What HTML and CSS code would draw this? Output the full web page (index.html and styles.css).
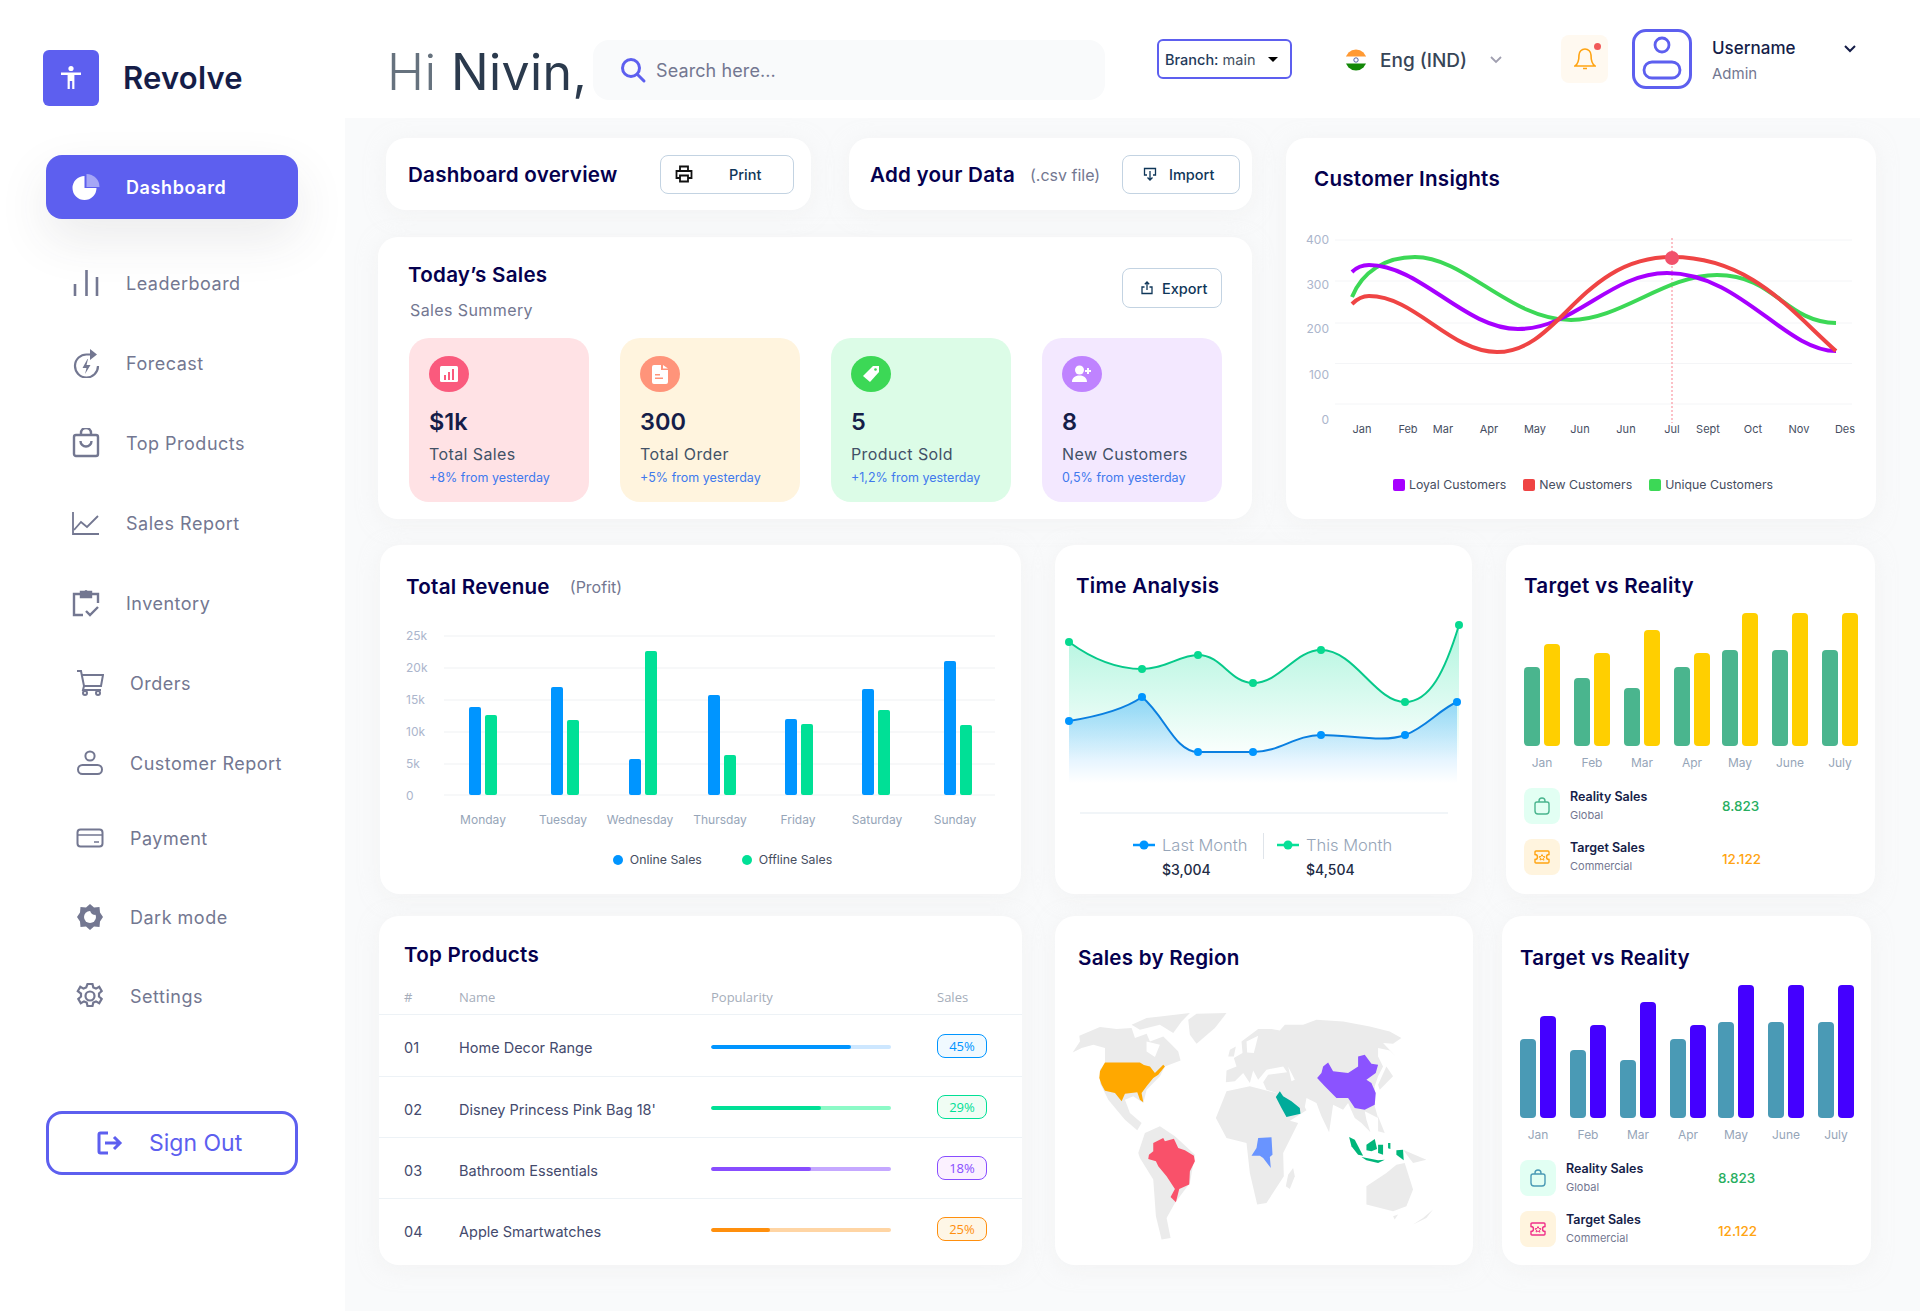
FILE: index.html
```html
<!DOCTYPE html>
<html lang="en">
<head>
    <meta charset="UTF-8">
    <meta name="viewport" content="width=device-width, initial-scale=1.0">
    <title>Revolve Dashboard</title>
    <link rel="stylesheet" href="styles.css">
</head>
<body>
<div class="page">

    <aside class="sidebar">
        <div class="brand">
            <div class="brand-logo">
                <svg width="24" height="26" viewBox="0 0 24 26" fill="#fff"><circle cx="12" cy="3.5" r="2.6"/><path d="M2 7.5h20v2.6h-6.6V24h-2.2v-8h-2.4v8H8.600V10.100H2z"/></svg>
            </div>
            <span class="brand-name">Revolve</span>
        </div>

        <a class="nav-active">
            <svg class="nav-icon" width="28" height="28" viewBox="0 0 28 28"><path fill="#fff" d="M12.500 3A12 12 0 1 0 24.500 15H12.500z"/><path fill="#a5a6f6" d="M14.500 1A13 13 0 0 1 27.500 14H14.500z"/></svg>
            <span>Dashboard</span>
        </a>

        <nav class="nav-list">
            <a class="nav-item">
                <svg class="nav-icon" width="28" height="28" viewBox="0 0 28 28" fill="none" stroke="#737791" stroke-width="2.600"><path d="M3 27v-12M14.500 27V1M25 27V8"/></svg>
                <span>Leaderboard</span>
            </a>
            <a class="nav-item">
                <svg class="nav-icon" width="28" height="30" viewBox="0 0 28 30" fill="none" stroke="#737791" stroke-width="2.200"><path d="M19 6.500H15A11.500 11.500 0 1 0 26 18"/><path fill="#737791" stroke="none" d="M18 1l7 5.500-7 5.500zM15.500 11l-5 9h4l-1.500 6 5.500-9h-4l1.500-6z"/></svg>
                <span>Forecast</span>
            </a>
            <a class="nav-item">
                <svg class="nav-icon" width="28" height="30" viewBox="0 0 28 30" fill="none" stroke="#737791" stroke-width="2.400"><rect x="2" y="7" width="24" height="21" rx="2"/><path d="M9 7V5a5 5 0 0 1 10 0v2M8.500 13a5.500 5.500 0 0 0 11 0"/></svg>
                <span>Top Products</span>
            </a>
            <a class="nav-item">
                <svg class="nav-icon" width="28" height="24" viewBox="0 0 28 24" fill="none" stroke="#737791" stroke-width="1.800"><path d="M1 1v22h26"/><path d="M2 19l7-8 6 5 11-11"/></svg>
                <span>Sales Report</span>
            </a>
            <a class="nav-item">
                <svg class="nav-icon" width="28" height="28" viewBox="0 0 28 28" fill="none" stroke="#737791" stroke-width="2.400"><path d="M8 5H2v21h9M20 5h6v9"/><path fill="#737791" d="M9 3h10v5H9z"/><circle cx="14" cy="2.500" r="1.500" fill="#737791" stroke="none"/><path d="M14 22l4 4 8-8"/></svg>
                <span>Inventory</span>
            </a>
            <a class="nav-item nav-item--shift">
                <svg class="nav-icon" width="28" height="26" viewBox="0 0 28 26" fill="none" stroke="#737791" stroke-width="2"><path d="M1 1h4l3 15h17l2-11H6"/><path d="M8 16l-1 4h18"/><circle cx="9" cy="23" r="2"/><circle cx="22" cy="23" r="2"/></svg>
                <span>Orders</span>
            </a>
            <a class="nav-item nav-item--shift">
                <svg class="nav-icon" width="28" height="26" viewBox="0 0 28 26" fill="none" stroke="#737791" stroke-width="2"><circle cx="14" cy="6" r="4.600"/><rect x="2" y="15" width="24" height="9" rx="4.500"/></svg>
                <span>Customer Report</span>
            </a>
            <a class="nav-item nav-item--shift nav-item--pull">
                <svg class="nav-icon" width="28" height="20" viewBox="0 0 28 20" fill="none" stroke="#737791" stroke-width="2"><rect x="1.500" y="1.500" width="25" height="17" rx="3"/><path d="M1.500 7h25M18 14h5" stroke-width="1.400"/></svg>
                <span>Payment</span>
            </a>
            <a class="nav-item nav-item--shift nav-item--dark">
                <svg class="nav-icon" width="28" height="28" viewBox="0 0 28 28"><path fill="#737791" d="M14 1l4 3.500 5.500-.5.500 5.500L27 14l-3 4.500-.500 5.500-5.500-.5L14 27l-4-3.500-5.500.5-.500-5.500L1 14l3-4.500.500-5.500 5.500.5z"/><circle cx="14" cy="14" r="6" fill="#fff"/><path fill="#737791" d="M14 7.500a6.500 6.500 0 0 1 6 4.500 6 6 0 0 1-6-4.500z"/></svg>
                <span>Dark mode</span>
            </a>
            <a class="nav-item nav-item--shift nav-item--settings">
                <svg class="nav-icon" width="28" height="28" viewBox="0 0 28 28" fill="none" stroke="#737791" stroke-width="2.200"><circle cx="14" cy="14" r="4.500"/><path d="M11.500 2h5l.8 3.500 2.700 1.100 3.200-1.800 2.500 4.300-2.700 2.400v3l2.700 2.400-2.500 4.300-3.200-1.800-2.700 1.100-.8 3.500h-5l-.8-3.500-2.700-1.100-3.200 1.800-2.500-4.300 2.700-2.400v-3L1.800 9.100l2.500-4.300 3.200 1.800 2.700-1.100z"/></svg>
                <span>Settings</span>
            </a>
        </nav>

        <a class="sign-out">
            <svg width="26" height="24" viewBox="0 0 26 24" fill="none" stroke="#5d5fef" stroke-width="3"><path d="M11 2H3.500A1.500 1.500 0 0 0 2 3.500v17A1.500 1.500 0 0 0 3.500 22H11"/><path d="M8 12h15M17 6l6 6-6 6"/></svg>
            <span>Sign Out</span>
        </a>
    </aside>

    <main class="main">
        <header class="topbar">
            <h1 class="greeting"><span class="greeting-hi">Hi</span> Nivin,</h1>
            <div class="search">
                <svg width="28" height="28" viewBox="0 0 28 28" fill="none" stroke="#5d5fef" stroke-width="3"><circle cx="12" cy="12" r="8.500"/><path d="M18.500 18.500L25 25" stroke-linecap="round"/></svg>
                <span>Search here...</span>
            </div>
            <div class="branch"><span><b>Branch:</b> main</span><i class="caret"></i></div>
            <div class="lang">
                <svg width="22" height="22" viewBox="0 0 22 22"><clipPath id="flagClip"><circle cx="11" cy="11" r="10.500"/></clipPath><g clip-path="url(#flagClip)"><rect width="22" height="8" fill="#ff9933"/><rect y="7.500" width="22" height="7" fill="#fff"/><rect y="14.500" width="22" height="8" fill="#138808"/></g><circle cx="11" cy="11" r="2.200" fill="none" stroke="#2a3a8c" stroke-width=".8"/></svg>
                <span>Eng (IND)</span>
                <svg width="12" height="8" viewBox="0 0 12 8" fill="none" stroke="#a09fb0" stroke-width="1.800"><path d="M1 1l5 5 5-5"/></svg>
            </div>
            <div class="bell">
                <svg width="22" height="24" viewBox="0 0 22 24" fill="none" stroke="#ffa412" stroke-width="1.600"><path d="M11 2a6 6 0 0 0-6 6c0 7-2.500 10-4 11h20c-1.500-1-4-4-4-11a6 6 0 0 0-6-6zM9 21.500h4"/></svg>
                <i class="bell-dot"></i>
            </div>
            <div class="avatar">
                <svg width="42" height="46" viewBox="0 0 42 46" fill="none" stroke="#5d5fef" stroke-width="2.800"><circle cx="21" cy="9" r="7"/><rect x="3" y="26" width="36" height="16" rx="8"/></svg>
            </div>
            <div class="user">
                <div class="user-name">Username</div>
                <div class="user-role">Admin</div>
            </div>
            <svg class="user-caret" width="12" height="8" viewBox="0 0 12 8" fill="none" stroke="#151d48" stroke-width="2"><path d="M1 1l5 5 5-5"/></svg>
        </header>

        <div class="content">
            <section class="row-top">
                <div class="col-left">
                    <div class="toolbar">
                        <div class="card bar-card bar-card--overview">
                            <h2 class="title">Dashboard overview</h2>
                            <button class="btn btn--print">
                                <svg width="18" height="18" viewBox="0 0 18 18" fill="none" stroke="#111" stroke-width="1.800"><path d="M5 6V1.500h8V6M5 13H1.500V6h15v7H13"/><path d="M5 10.500h8v6H5z"/></svg>
                                <span>Print</span>
                            </button>
                        </div>
                        <div class="card bar-card bar-card--import">
                            <h2 class="title">Add your Data</h2>
                            <span class="title-note">(.csv file)</span>
                            <button class="btn btn--import">
                                <svg width="14" height="14" viewBox="0 0 14 14" fill="none" stroke="#0f3659" stroke-width="1.300"><path d="M4 8H1.500V1.500h11V8H10M7 4v9M4.500 10.500L7 13l2.500-2.500"/></svg>
                                <span>Import</span>
                            </button>
                        </div>
                    </div>

                    <div class="card sales">
                        <div class="sales-head">
                            <div>
                                <h2 class="title">Today’s Sales</h2>
                                <p class="sales-sub">Sales Summery</p>
                            </div>
                            <button class="btn btn--export">
                                <svg width="14" height="14" viewBox="0 0 14 14" fill="none" stroke="#0f3659" stroke-width="1.300"><path d="M4.500 6H2v6.500h10V6H9.500M7 9V1M4.800 3.200L7 1l2.200 2.200"/></svg>
                                <span>Export</span>
                            </button>
                        </div>
                        <div class="stat-grid">
                            <div class="stat stat--pink">
                                <div class="stat-icon stat-icon--pink"><svg width="18" height="16" viewBox="0 0 18 16"><rect width="18" height="16" rx="1.500" fill="#fff"/><path fill="#fa5a7d" d="M4 9h2v5H4zM8 6h2v8H8zM12 3h2v11h-2z"/></svg></div>
                                <div class="stat-value">$1k</div>
                                <div class="stat-label">Total Sales</div>
                                <div class="stat-note">+8% from yesterday</div>
                            </div>
                            <div class="stat stat--cream">
                                <div class="stat-icon stat-icon--orange"><svg width="16" height="19" viewBox="0 0 16 19"><path fill="#fff" d="M2 0h7v5h7v12a2 2 0 0 1-2 2H2a2 2 0 0 1-2-2V2a2 2 0 0 1 2-2zM11 0l5 3.500h-5z"/><path fill="#ff947a" d="M3 9h5v1.500H3zM3 12.500h8V14H3z"/></svg></div>
                                <div class="stat-value">300</div>
                                <div class="stat-label">Total Order</div>
                                <div class="stat-note">+5% from yesterday</div>
                            </div>
                            <div class="stat stat--mint">
                                <div class="stat-icon stat-icon--green"><svg width="18" height="18" viewBox="0 0 18 18"><path fill="#fff" d="M11 1h6v6l-9 10-7-6z"/><circle cx="13.500" cy="4.500" r="1.300" fill="#3cd856"/></svg></div>
                                <div class="stat-value">5</div>
                                <div class="stat-label">Product Sold</div>
                                <div class="stat-note">+1,2% from yesterday</div>
                            </div>
                            <div class="stat stat--lilac">
                                <div class="stat-icon stat-icon--purple"><svg width="20" height="18" viewBox="0 0 20 18" fill="#fff"><circle cx="7.500" cy="5" r="4.500"/><path d="M0 17c0-4 3-6.500 7.500-6.500S15 13 15 17zM15 3h2v2h2v2h-2v2h-2V7h-2V5h2z"/></svg></div>
                                <div class="stat-value">8</div>
                                <div class="stat-label">New Customers</div>
                                <div class="stat-note">0,5% from yesterday</div>
                            </div>
                        </div>
                    </div>
                </div>

                <div class="card insights">
                    <h2 class="title">Customer Insights</h2>
                    <svg class="chart chart--insights" width="590" height="220" viewBox="1286 225 590 220">
                        <g class="grid-line">
                            <path d="M1335 240H1852M1335 281H1852M1335 323H1852M1335 363.500H1852M1335 404H1852"/>
                        </g>
                        <g class="axis-y" text-anchor="end">
                            <text x="1329" y="244">400</text>
                            <text x="1329" y="289">300</text>
                            <text x="1329" y="333">200</text>
                            <text x="1329" y="379">100</text>
                            <text x="1329" y="424">0</text>
                        </g>
                        <g class="axis-x" text-anchor="middle">
                            <text x="1362" y="433">Jan</text>
                            <text x="1408" y="433">Feb</text>
                            <text x="1443" y="433">Mar</text>
                            <text x="1489" y="433">Apr</text>
                            <text x="1535" y="433">May</text>
                            <text x="1580" y="433">Jun</text>
                            <text x="1626" y="433">Jun</text>
                            <text x="1672" y="433">Jul</text>
                            <text x="1708" y="433">Sept</text>
                            <text x="1753" y="433">Oct</text>
                            <text x="1799" y="433">Nov</text>
                            <text x="1845" y="433">Des</text>
                        </g>
                        <path d="M1672 238V423" stroke="#f9828f" stroke-width="1" stroke-dasharray="2 2" fill="none"/>
                        <g fill="none" stroke-width="4">
                            <path stroke="#3cd856" d="M1352 297C1362 272 1385 257 1415 257C1465 257 1510 320 1571 320C1620 320 1665 275 1717 275C1775 275 1785 322 1836 323"/>
                            <path stroke="#a700ff" d="M1352 272C1356 268 1362 265 1369 265C1420 265 1465 329 1518 329C1575 329 1610 273 1667 273C1740 273 1785 351 1836 351"/>
                            <path stroke="#ef4444" d="M1352 304C1356 300 1362 296 1369 296C1415 296 1450 352 1497 352C1560 352 1580 257 1672 257C1750 257 1790 310 1836 351"/>
                        </g>
                        <circle cx="1672" cy="258" r="7" fill="#f1516b"/>
                    </svg>
                    <div class="legend legend--insights">
                        <span class="legend-item"><i class="swatch swatch--purple"></i>Loyal Customers</span>
                        <span class="legend-item"><i class="swatch swatch--red"></i>New Customers</span>
                        <span class="legend-item"><i class="swatch swatch--green"></i>Unique Customers</span>
                    </div>
                </div>
            </section>

            <section class="row-mid">
                <div class="card revenue">
                    <div class="title-row">
                        <h2 class="title">Total Revenue</h2>
                        <span class="title-note">(Profit)</span>
                    </div>
                    <svg class="chart" width="641" height="215" viewBox="380 620 641 215">
                        <g class="grid-line grid-line--strong">
                            <path d="M444 635H995M444 667H995M444 699H995M444 731H995M444 763H995M444 794H995"/>
                        </g>
                        <g class="axis-y">
                            <text x="406" y="639">25k</text>
                            <text x="406" y="671">20k</text>
                            <text x="406" y="703">15k</text>
                            <text x="406" y="735">10k</text>
                            <text x="406" y="767">5k</text>
                            <text x="406" y="799">0</text>
                        </g>
                        <g fill="#0095ff">
                            <rect x="469" y="706" width="12" height="88" rx="2"/>
                            <rect x="551" y="686" width="12" height="108" rx="2"/>
                            <rect x="629" y="758" width="12" height="36" rx="2"/>
                            <rect x="708" y="694" width="12" height="100" rx="2"/>
                            <rect x="785" y="718" width="12" height="76" rx="2"/>
                            <rect x="862" y="688" width="12" height="106" rx="2"/>
                            <rect x="944" y="660" width="12" height="134" rx="2"/>
                        </g>
                        <g fill="#00e096">
                            <rect x="485" y="714" width="12" height="80" rx="2"/>
                            <rect x="567" y="719" width="12" height="75" rx="2"/>
                            <rect x="645" y="650" width="12" height="144" rx="2"/>
                            <rect x="724" y="754" width="12" height="40" rx="2"/>
                            <rect x="801" y="723" width="12" height="71" rx="2"/>
                            <rect x="878" y="709" width="12" height="85" rx="2"/>
                            <rect x="960" y="724" width="12" height="70" rx="2"/>
                        </g>
                        <g class="axis-x axis-x--soft" text-anchor="middle">
                            <text x="483" y="823">Monday</text>
                            <text x="563" y="823">Tuesday</text>
                            <text x="640" y="823">Wednesday</text>
                            <text x="720" y="823">Thursday</text>
                            <text x="798" y="823">Friday</text>
                            <text x="877" y="823">Saturday</text>
                            <text x="955" y="823">Sunday</text>
                        </g>
                    </svg>
                    <div class="legend legend--revenue">
                        <span class="legend-item"><i class="dot dot--blue"></i>Online Sales</span>
                        <span class="legend-item"><i class="dot dot--green"></i>Offline Sales</span>
                    </div>
                </div>

                <div class="card time">
                    <h2 class="title">Time Analysis</h2>
                    <svg class="chart" width="417" height="200" viewBox="1055 615 417 200">
                        <defs>
                            <linearGradient id="areaGreen" x1="0" y1="0" x2="0" y2="1">
                                <stop offset="0" stop-color="#07e098" stop-opacity=".32"/>
                                <stop offset="1" stop-color="#07e098" stop-opacity="0"/>
                            </linearGradient>
                            <linearGradient id="areaBlue" x1="0" y1="0" x2="0" y2="1">
                                <stop offset="0" stop-color="#0095ff" stop-opacity=".36"/>
                                <stop offset="1" stop-color="#0095ff" stop-opacity="0"/>
                            </linearGradient>
                        </defs>
                        <path fill="url(#areaGreen)" d="M1069 641C1095 660 1120 668 1142 668C1165 668 1180 654 1198 654C1222 654 1230 682 1253 682C1280 682 1295 649 1321 649C1355 649 1375 701 1405 701C1430 701 1445 670 1459 624V760H1069Z"/>
                        <path fill="url(#areaBlue)" d="M1069 720C1100 715 1125 708 1142 696C1165 715 1175 751 1198 751H1253C1280 751 1295 734 1321 734C1350 734 1385 742 1405 734C1425 727 1440 708 1457 701V782H1069Z"/>
                        <g fill="none" stroke-width="2">
                            <path stroke="#07c98a" d="M1069 641C1095 660 1120 668 1142 668C1165 668 1180 654 1198 654C1222 654 1230 682 1253 682C1280 682 1295 649 1321 649C1355 649 1375 701 1405 701C1430 701 1445 670 1459 624"/>
                            <path stroke="#0a7fe0" d="M1069 720C1100 715 1125 708 1142 696C1165 715 1175 751 1198 751H1253C1280 751 1295 734 1321 734C1350 734 1385 742 1405 734C1425 727 1440 708 1457 701"/>
                        </g>
                        <g fill="#07d990">
                            <circle cx="1069" cy="641" r="4"/><circle cx="1142" cy="668" r="4"/><circle cx="1198" cy="654" r="4"/><circle cx="1253" cy="682" r="4"/><circle cx="1321" cy="649" r="4"/><circle cx="1405" cy="701" r="4"/><circle cx="1459" cy="624" r="4"/>
                        </g>
                        <g fill="#0095ff">
                            <circle cx="1069" cy="720" r="4"/><circle cx="1142" cy="696" r="4"/><circle cx="1198" cy="751" r="4"/><circle cx="1253" cy="751" r="4"/><circle cx="1321" cy="734" r="4"/><circle cx="1405" cy="734" r="4"/><circle cx="1457" cy="701" r="4"/>
                        </g>
                        <path d="M1080 812H1448" stroke="#edf2f6" stroke-width="1.500"/>
                    </svg>
                    <div class="time-legend">
                        <div class="time-col time-col--last">
                            <div class="time-label">
                                <svg width="22" height="10" viewBox="0 0 22 10"><path d="M0 5h22" stroke="#0095ff" stroke-width="2.500"/><circle cx="11" cy="5" r="4.500" fill="#0095ff"/></svg>
                                <span>Last Month</span>
                            </div>
                            <div class="time-value">$3,004</div>
                        </div>
                        <div class="time-col">
                            <div class="time-label">
                                <svg width="22" height="10" viewBox="0 0 22 10"><path d="M0 5h22" stroke="#07e098" stroke-width="2.500"/><circle cx="11" cy="5" r="4.500" fill="#07e098"/></svg>
                                <span>This Month</span>
                            </div>
                            <div class="time-value">$4,504</div>
                        </div>
                    </div>
                </div>

                <div class="card target">
                    <h2 class="title">Target vs Reality</h2>
                    <div class="bars">
                        <div class="bar-group"><i style="height:79px"></i><i style="height:102px"></i></div>
                        <div class="bar-group"><i style="height:68px"></i><i style="height:93px"></i></div>
                        <div class="bar-group"><i style="height:58px"></i><i style="height:116px"></i></div>
                        <div class="bar-group"><i style="height:79px"></i><i style="height:93px"></i></div>
                        <div class="bar-group bar-group--tuck"><i style="height:96px"></i><i style="height:133px"></i></div>
                        <div class="bar-group"><i style="height:96px"></i><i style="height:133px"></i></div>
                        <div class="bar-group"><i style="height:96px"></i><i style="height:133px"></i></div>
                    </div>
                    <div class="bar-labels">
                        <span>Jan</span><span>Feb</span><span>Mar</span><span>Apr</span><span class="bar-group--tuck">May</span><span>June</span><span>July</span>
                    </div>
                    <div class="tv-row">
                        <div class="tv-icon tv-icon--mint"><svg width="16" height="18" viewBox="0 0 16 18" fill="none" stroke="#4ab58e" stroke-width="1.400"><path d="M3 5h10q2 0 2 2v7q0 3-3 3H4q-3 0-3-3V7q0-2 2-2zM5 5V4a3 3 0 0 1 6 0v1"/></svg></div>
                        <div class="tv-text"><b>Reality Sales</b><span>Global</span></div>
                        <div class="tv-value tv-value--green">8.823</div>
                    </div>
                    <div class="tv-row">
                        <div class="tv-icon tv-icon--cream"><svg width="16" height="14" viewBox="0 0 16 14" fill="none" stroke="#ffa412" stroke-width="1.400"><path d="M2 1h12q1 0 1 1v2.500a2.500 2.500 0 0 0 0 5V12q0 1-1 1H2q-1 0-1-1V9.500a2.500 2.500 0 0 0 0-5V2q0-1 1-1z"/><path d="M8 4.500l1 2 2 .3-1.500 1.400.4 2L8 9l-1.900 1 .4-2L5 6.800l2-.3z" stroke-width="1"/></svg></div>
                        <div class="tv-text"><b>Target Sales</b><span>Commercial</span></div>
                        <div class="tv-value tv-value--orange">12.122</div>
                    </div>
                </div>
            </section>

            <section class="row-bottom">
                <div class="card products">
                    <h2 class="title">Top Products</h2>
                    <div class="tbl-row tbl-row--head">
                        <span>#</span><span>Name</span><span>Popularity</span><span>Sales</span>
                    </div>
                    <div class="tbl-row">
                        <span>01</span><span>Home Decor Range</span>
                        <div class="meter meter--blue"><i style="width:78%"></i></div>
                        <span class="pill pill--blue">45%</span>
                    </div>
                    <div class="tbl-row">
                        <span>02</span><span>Disney Princess Pink Bag 18'</span>
                        <div class="meter meter--green"><i style="width:61%"></i></div>
                        <span class="pill pill--green">29%</span>
                    </div>
                    <div class="tbl-row">
                        <span>03</span><span>Bathroom Essentials</span>
                        <div class="meter meter--purple"><i style="width:55.500%"></i></div>
                        <span class="pill pill--purple">18%</span>
                    </div>
                    <div class="tbl-row">
                        <span>04</span><span>Apple Smartwatches</span>
                        <div class="meter meter--orange"><i style="width:33%"></i></div>
                        <span class="pill pill--orange">25%</span>
                    </div>
                </div>

                <div class="card region">
                    <h2 class="title">Sales by Region</h2>
                    <svg class="chart" width="418" height="260" viewBox="15 250 1255 780">
                        <g fill="#ebebeb">
                            <path d="M68 428L90 395L88 378L150 352L200 358L245 355L255 385L290 372L300 395L340 380L360 400L385 425L392 452L345 470L330 500L290 540L280 580L250 560L225 570L240 610L275 640L262 662L225 630L175 570L150 520L150 480L165 460L165 415L130 405L95 415Z"/>
                            <path d="M245 345L290 325L350 318L420 310L395 335L370 370L330 345L270 360Z"/>
                            <path d="M415 330L440 312L530 310L495 355L440 402L420 375Z"/>
                            <path d="M265 730L285 670L330 650L375 680L435 735L420 820L375 880L350 925L362 985L335 990L318 920L310 810L270 745Z"/>
                            <path d="M498 625L530 545L600 530L680 550L710 630L745 640L700 730L702 800L650 880L622 885L600 790L590 700L530 685Z"/>
                            <path d="M730 775L735 800L720 838L708 830L715 795Z"/>
                            <path d="M528 518L530 482L560 470L552 445L578 430L575 395L625 358L665 358L690 362L705 345L760 345L800 330L880 335L960 350L1020 365L1055 385L1030 402L1000 400L1040 442L1020 422L985 415L985 440L1000 470L985 500L975 530L975 590L985 625L945 605L950 630L962 668L935 640L915 625L895 580L880 600L850 585L838 668L815 620L800 580L770 565L765 592L770 602L710 640L700 625L680 570L680 550L650 540L640 518L655 495L712 488L700 470L650 480L625 510L610 482L600 520L580 490L555 515Z"/>
                            <path d="M540 420L558 410L552 440L535 440Z"/>
                            <path d="M1010 470L1030 500L990 540L985 525Z"/>
                            <path d="M985 620L1005 670L985 665Z"/>
                            <path d="M1060 720L1130 750L1090 760Z"/>
                            <path d="M950 830L1010 790L1040 765L1065 760L1090 840L1070 890L1030 905L950 885Z"/>
                            <path d="M1150 900L1130 925L1090 945L1120 925Z"/>
                            <path d="M1030 920L1045 915L1035 930Z"/>
                        </g>
                        <g fill="#fff">
                            <path d="M290 395L330 405L315 442L290 425Z"/>
                            <path d="M590 395L625 378L612 430L592 428Z"/>
                            <path d="M715 470L735 510L725 515Z"/>
                        </g>
                        <path fill="#ffa800" d="M165 458L270 458L282 466L300 470L315 490L340 465L345 470L325 495L310 505L290 530L275 550L280 578L270 570L262 548L225 552L215 575L195 550L165 543L155 525L148 505L150 485Z"/>
                        <path fill="#f9516a" d="M310 700L340 685L345 695L372 687L385 715L405 722L432 738L435 755L420 785L418 825L388 838L378 878L362 862L375 838L350 800L325 770L318 755L295 748L297 735L310 725Z"/>
                        <path fill="#00ab9a" d="M690 545L700 560L725 575L750 595L752 612L710 622L695 595L678 562Z"/>
                        <path fill="#6994ff" d="M625 685L665 683L668 735L660 742L663 775L640 745L630 738L605 738L620 715Z"/>
                        <path fill="#8b53ff" d="M835 458L850 485L895 490L925 470L925 440L945 435L965 462L985 465L978 490L950 510L965 520L978 550L975 585L945 600L915 595L895 565L860 565L825 530L802 505L815 490L820 470Z"/>
                        <g fill="#00b67a">
                            <path d="M898 682L915 690L940 738L925 735L905 710Z"/>
                            <path d="M950 705L975 688L982 718L965 725L950 722Z"/>
                            <path d="M935 742L985 752L1005 750L985 760L950 752Z"/>
                            <path d="M985 705L1000 705L1000 735L985 730Z"/>
                            <path d="M1015 700L1022 700L1022 718L1015 716Z"/>
                            <path d="M1040 722L1060 720L1062 752L1040 735Z"/>
                        </g>
                    </svg>
                </div>

                <div class="card target target--alt">
                    <h2 class="title">Target vs Reality</h2>
                    <div class="bars">
                        <div class="bar-group"><i style="height:79px"></i><i style="height:102px"></i></div>
                        <div class="bar-group"><i style="height:68px"></i><i style="height:93px"></i></div>
                        <div class="bar-group"><i style="height:58px"></i><i style="height:116px"></i></div>
                        <div class="bar-group"><i style="height:79px"></i><i style="height:93px"></i></div>
                        <div class="bar-group bar-group--tuck"><i style="height:96px"></i><i style="height:133px"></i></div>
                        <div class="bar-group"><i style="height:96px"></i><i style="height:133px"></i></div>
                        <div class="bar-group"><i style="height:96px"></i><i style="height:133px"></i></div>
                    </div>
                    <div class="bar-labels">
                        <span>Jan</span><span>Feb</span><span>Mar</span><span>Apr</span><span class="bar-group--tuck">May</span><span>June</span><span>July</span>
                    </div>
                    <div class="tv-row">
                        <div class="tv-icon tv-icon--mint"><svg width="16" height="18" viewBox="0 0 16 18" fill="none" stroke="#4a9ab5" stroke-width="1.400"><path d="M3 5h10q2 0 2 2v7q0 3-3 3H4q-3 0-3-3V7q0-2 2-2zM5 5V4a3 3 0 0 1 6 0v1"/></svg></div>
                        <div class="tv-text"><b>Reality Sales</b><span>Global</span></div>
                        <div class="tv-value tv-value--green">8.823</div>
                    </div>
                    <div class="tv-row">
                        <div class="tv-icon tv-icon--cream"><svg width="16" height="14" viewBox="0 0 16 14" fill="none" stroke="#f0308a" stroke-width="1.400"><path d="M2 1h12q1 0 1 1v2.500a2.500 2.500 0 0 0 0 5V12q0 1-1 1H2q-1 0-1-1V9.500a2.500 2.500 0 0 0 0-5V2q0-1 1-1z"/><path d="M8 4.500l1 2 2 .3-1.500 1.400.4 2L8 9l-1.900 1 .4-2L5 6.800l2-.3z" stroke-width="1"/></svg></div>
                        <div class="tv-text"><b>Target Sales</b><span>Commercial</span></div>
                        <div class="tv-value tv-value--orange">12.122</div>
                    </div>
                </div>
            </section>
        </div>
    </main>
</div>
</body>
</html>
```

FILE: styles.css
```css
* {
    box-sizing: border-box;
    margin: 0;
    padding: 0;
}

body {
    font-family: Inter, "Noto Sans", sans-serif;
    background-color: #f9fafb;
    color: #151d48;
}

.page {
    display: flex;
    width: 1920px;
    height: 1311px;
    overflow: hidden;
}

/* sidebar */
.sidebar {
    width: 345px;
    flex-shrink: 0;
    background-color: #fff;
    padding: 50px 47px 0 46px;
}

.brand {
    display: flex;
    align-items: center;
    gap: 24px;
    height: 56px;
    margin-left: -3px;
}

.brand-logo {
    width: 56px;
    height: 56px;
    border-radius: 6px;
    background-color: #5d5fef;
    display: flex;
    align-items: center;
    justify-content: center;
}

.brand-name {
    margin-top: -2px;
    font-size: 31px;
    font-weight: 600;
    letter-spacing: 0.2px;
}

.nav-active {
    display: flex;
    align-items: center;
    height: 64px;
    margin-top: 49px;
    padding-left: 26px;
    border-radius: 16px;
    background-color: #5d5fef;
    color: #fff;
    font-size: 18px;
    font-weight: 600;
    letter-spacing: 0.6px;
    box-shadow: 0 20px 50px rgba(55, 55, 70, 0.1);
}

.nav-icon {
    margin-right: 26px;
    flex-shrink: 0;
}

.nav-list {
    margin-top: 24px;
}

.nav-item {
    display: flex;
    align-items: center;
    height: 80px;
    padding-left: 26px;
    color: #737791;
    font-size: 18px;
    letter-spacing: 0.5px;
}

.nav-item--shift {
    padding-left: 30px;
}

.nav-item--pull {
    margin-top: -5px;
}

.nav-item--dark {
    margin-top: -1px;
}

.nav-item--settings {
    margin-top: -1px;
}

.sign-out {
    display: flex;
    align-items: center;
    height: 64px;
    margin-top: 75px;
    padding-left: 48px;
    gap: 26px;
    border: 3px solid #5d5fef;
    border-radius: 16px;
    color: #5d5fef;
    font-size: 23px;
}

/* top bar */
.main {
    flex: 1;
    min-width: 0;
}

.topbar {
    display: flex;
    align-items: center;
    height: 118px;
    padding-left: 42px;
    background-color: #fff;
}

.greeting {
    width: 206px;
    flex-shrink: 0;
    margin-top: 26px;
    font-size: 50px;
    font-weight: 400;
    color: #2b3a4d;
    white-space: nowrap;
    letter-spacing: 0.4px;
}

.greeting-hi {
    font-weight: 300;
    color: #66727e;
}

.search {
    display: flex;
    align-items: center;
    gap: 9px;
    width: 512px;
    height: 60px;
    margin-top: 22px;
    padding-left: 26px;
    border-radius: 16px;
    background-color: #f9fafb;
    color: #737791;
    font-size: 18px;
    letter-spacing: 0.1px;
}

.branch {
    display: flex;
    align-items: center;
    justify-content: space-between;
    width: 135px;
    height: 40px;
    margin-left: 52px;
    padding: 0 12px 0 6px;
    border: 2px solid #5d5fef;
    border-radius: 6px;
    font-size: 14.500px;
    color: #44505f;
}

.branch b {
    font-weight: 500;
    color: #1f3a5a;
}

.caret {
    border-left: 5px solid transparent;
    border-right: 5px solid transparent;
    border-top: 5px solid #000;
}

.lang {
    display: flex;
    align-items: center;
    margin: 2px 0 0 53px;
    font-size: 19px;
    font-weight: 500;
    color: #374557;
    width: 160px;
}

.lang span {
    margin: 0 24px 0 13px;
    white-space: nowrap;
    width: 86px;
}

.bell {
    position: relative;
    display: flex;
    align-items: center;
    justify-content: center;
    width: 47px;
    height: 48px;
    margin-left: 56px;
    border-radius: 8px;
    background-color: #fff9f0;
}

.bell-dot {
    position: absolute;
    top: 8px;
    right: 7px;
    width: 7px;
    height: 7px;
    border-radius: 50%;
    background-color: #f15a5a;
}

.avatar {
    display: flex;
    align-items: center;
    justify-content: center;
    width: 60px;
    height: 60px;
    margin-left: 24px;
    border: 3px solid #5d5fef;
    border-radius: 14px;
}

.user {
    width: 132px;
    margin: 2px 0 0 20px;
}

.user-name {
    font-size: 17px;
    font-weight: 500;
    line-height: 24px;
}

.user-role {
    margin-top: 3px;
    font-size: 15px;
    line-height: 22px;
    color: #737791;
}

.user-caret {
    margin-top: -20px;
}

/* layout */
.content {
    padding: 20px 0 0 33px;
}

.row-top {
    display: flex;
    gap: 34px;
}

.col-left {
    width: 874px;
}

.toolbar {
    display: flex;
    height: 72px;
    padding-left: 8px;
    gap: 38px;
}

.row-mid {
    display: flex;
    height: 349px;
    margin: 26px 0 0 2px;
    gap: 34px;
}

.row-bottom {
    display: flex;
    height: 349px;
    margin: 22px 0 0 1px;
    gap: 33px;
}

.card {
    background-color: #fff;
    border-radius: 20px;
    box-shadow: 0 4px 20px rgba(238, 238, 238, 0.5);
}

.title {
    font-size: 20.600px;
    font-weight: 600;
    line-height: 30px;
    color: #05004e;
    letter-spacing: 0.25px;
    white-space: nowrap;
}

.title-note {
    font-size: 16px;
    color: #737791;
    white-space: nowrap;
}

.chart {
    display: block;
}

.grid-line {
    fill: none;
    stroke: #f4f5f7;
    stroke-width: 1;
}

.grid-line--strong {
    stroke: #eff1f3;
}

.axis-y text {
    font-size: 12px;
    fill: #abb5cc;
}

.axis-x text {
    font-size: 11px;
    fill: #464e5f;
}

.axis-x--soft text {
    font-size: 12px;
    fill: #96a5b8;
}

.legend {
    display: flex;
    justify-content: center;
    font-size: 12.300px;
    line-height: 18px;
    color: #464e5f;
}

.legend-item {
    display: flex;
    align-items: center;
}

/* buttons and top cards */
.bar-card {
    display: flex;
    align-items: center;
    height: 72px;
}

.bar-card .title,
.bar-card .title-note {
    margin-top: 2px;
}

.bar-card--overview {
    width: 425px;
    padding: 0 17px 0 22px;
    justify-content: space-between;
}

.bar-card--import {
    width: 403px;
    padding: 0 12px 0 21px;
}

.bar-card--import .title-note {
    margin-left: 15px;
}

.btn {
    display: flex;
    align-items: center;
    height: 39px;
    border: 1px solid #c3d3e2;
    border-radius: 8px;
    background-color: #fff;
    font-family: inherit;
    font-size: 14.500px;
    font-weight: 500;
    color: #0f3659;
}

.btn--print {
    width: 134px;
    padding-left: 14px;
    gap: 36px;
}

.btn--import {
    width: 118px;
    margin-left: auto;
    padding-left: 20px;
    gap: 12px;
}

.btn--export {
    width: 100px;
    height: 40px;
    padding-left: 17px;
    gap: 8px;
}

/* today's sales */
.sales {
    height: 282px;
    margin-top: 27px;
    padding: 23px 30px 0 30px;
}

.sales-head {
    display: flex;
    justify-content: space-between;
}

.sales-head .btn--export {
    margin-top: 8px;
}

.sales-sub {
    margin: 8px 0 0 2px;
    font-size: 16px;
    line-height: 24px;
    color: #737791;
    letter-spacing: 0.4px;
}

.stat-grid {
    display: grid;
    grid-template-columns: repeat(4, 180px);
    gap: 31px;
    margin: 16px 0 0 1px;
}

.stat {
    height: 164px;
    padding: 18px 20px 0;
    border-radius: 20px;
}

.stat--pink { background-color: #ffe2e5; }
.stat--cream { background-color: #fff4de; }
.stat--mint { background-color: #dcfce7; }
.stat--lilac { background-color: #f3e8ff; }

.stat-icon {
    display: flex;
    align-items: center;
    justify-content: center;
    width: 40px;
    height: 36px;
    border-radius: 50%;
}

.stat-icon--pink { background-color: #fa5a7d; }
.stat-icon--orange { background-color: #ff947a; }
.stat-icon--green { background-color: #3cd856; }
.stat-icon--purple { background-color: #bf83ff; }

.stat-value {
    margin-top: 12px;
    font-size: 23.500px;
    font-weight: 600;
    line-height: 36px;
}

.stat-label {
    margin-top: 2px;
    font-size: 16px;
    line-height: 24px;
    color: #425166;
    letter-spacing: 0.4px;
}

.stat-note {
    font-size: 12.500px;
    line-height: 24px;
    color: #4079ed;
}

/* customer insights */
.insights {
    width: 590px;
    height: 381px;
    padding-top: 26px;
}

.insights .title {
    margin-left: 28px;
}

.chart--insights {
    margin-top: 31px;
}

.legend--insights {
    margin-top: 31px;
    gap: 17px;
    padding-left: 4px;
}

.swatch {
    width: 12px;
    height: 12px;
    margin-right: 4px;
    border-radius: 2px;
}

.swatch--purple { background-color: #a700ff; }
.swatch--red { background-color: #ef4444; }
.swatch--green { background-color: #3cd856; }

/* revenue */
.revenue {
    width: 641px;
    padding-top: 27px;
}

.title-row {
    display: flex;
    align-items: center;
    gap: 20px;
    margin-left: 26px;
}

.revenue .chart {
    margin-top: 19px;
}

.legend--revenue {
    margin-top: 15px;
    gap: 40px;
    padding-left: 44px;
}

.dot {
    width: 10px;
    height: 10px;
    margin-right: 7px;
    border-radius: 50%;
}

.dot--blue { background-color: #0095ff; }
.dot--green { background-color: #00e096; }

/* time analysis */
.time {
    width: 417px;
    padding-top: 26px;
    overflow: hidden;
}

.time .title {
    margin-left: 21px;
}

.time .chart {
    margin-top: 15px;
}

.time-legend {
    display: flex;
    margin: 17px 0 0 78px;
}

.time-col {
    width: 129px;
}

.time-col--last {
    width: 131px;
    height: 26px;
    margin-right: 13px;
    border-right: 1px solid #dfe4ea;
}

.time-label {
    display: flex;
    align-items: center;
    gap: 7px;
    height: 24px;
    font-size: 16.500px;
    font-weight: 300;
    color: #96a5b8;
    white-space: nowrap;
}

.time-value {
    margin: 1px 0 0 29px;
    font-size: 14px;
    font-weight: 500;
    line-height: 24px;
    color: #222b45;
}

/* target vs reality */
.target {
    width: 369px;
    padding: 26px 0 0 18px;
}

.bars {
    display: flex;
    align-items: flex-end;
    gap: 14px;
    height: 133px;
    margin-top: 12px;
}

.bar-group {
    display: flex;
    align-items: flex-end;
    gap: 4px;
    width: 36px;
}

.bar-group i {
    width: 16px;
    border-radius: 4px;
    background-color: #4ab58e;
}

.bar-group i:last-child {
    background-color: #ffcf00;
}

.bar-group--tuck {
    margin-left: -2px;
}

.target--alt {
    padding-top: 27px;
}

.target--alt .bar-group i {
    background-color: #4a9ab5;
}

.target--alt .bar-group i:last-child {
    background-color: #4400ff;
}

.bar-labels {
    display: flex;
    gap: 14px;
    margin-top: 8px;
    font-size: 12px;
    line-height: 18px;
    color: #96a5b8;
}

.bar-labels span {
    width: 36px;
    text-align: center;
    white-space: nowrap;
}

.tv-row {
    display: flex;
    align-items: center;
    height: 36px;
    margin-top: 15px;
}

.bar-labels + .tv-row {
    margin-top: 16px;
}

.tv-icon {
    display: flex;
    align-items: center;
    justify-content: center;
    width: 36px;
    height: 36px;
    border-radius: 8px;
}

.tv-icon--mint { background-color: #e2fff3; }
.tv-icon--cream { background-color: #fff4de; }

.tv-text {
    width: 142px;
    margin-left: 10px;
}

.tv-text b {
    display: block;
    font-size: 12.500px;
    font-weight: 600;
    line-height: 18px;
}

.tv-text span {
    display: block;
    font-size: 11px;
    line-height: 18px;
    color: #737791;
}

.tv-value {
    margin-left: 10px;
    font-size: 13.500px;
    font-weight: 500;
}

.tv-value--green { color: #27ae60; }

.tv-value--orange {
    margin-top: 3px;
    color: #ffa412;
}

/* top products */
.products {
    width: 643px;
    padding-top: 24px;
}

.products .title {
    margin-left: 25px;
}

.tbl-row {
    display: grid;
    grid-template-columns: 55px 252px 226px 1fr;
    align-items: center;
    height: 61px;
    padding-left: 25px;
    border-top: 1px solid #edf2f6;
    font-size: 14.500px;
    color: #444a6d;
}

.tbl-row > span {
    padding-top: 4px;
}

.tbl-row--head {
    height: 36px;
    margin-top: 9px;
    border-top: none;
    border-bottom: 1px solid #edf2f6;
    font-family: "Open Sans", sans-serif;
    font-size: 13px;
    color: #a5adba;
}

.tbl-row--head > span {
    padding-top: 0;
}

.tbl-row--head + .tbl-row {
    border-top: none;
}

.meter {
    width: 180px;
    height: 4px;
    margin-top: 2px;
    border-radius: 2px;
    overflow: hidden;
}

.meter i {
    display: block;
    height: 100%;
    border-radius: 2px;
}

.meter--blue { background-color: #cde7ff; }
.meter--blue i { background-color: #0095ff; }
.meter--green { background-color: #8cfac7; }
.meter--green i { background-color: #00e096; }
.meter--purple { background-color: #c5a8ff; }
.meter--purple i { background-color: #884dff; }
.meter--orange { background-color: #ffd5a4; }
.meter--orange i { background-color: #ff8f0d; }

.tbl-row > .pill {
    width: 50px;
    height: 24px;
    padding-top: 0;
    border: 1px solid;
    border-radius: 8px;
    font-family: "Open Sans", sans-serif;
    font-size: 13px;
    line-height: 22px;
    text-align: center;
}

.pill--blue { color: #0095ff; background-color: #f0f9ff; }
.pill--green { color: #00e096; background-color: #f0fdf4; }
.pill--purple { color: #884dff; background-color: #fbf1ff; }
.pill--orange { color: #ff8f0d; background-color: #fef6e6; }

/* region */
.region {
    width: 418px;
    padding-top: 27px;
}

.region .title {
    margin-left: 23px;
}

.region .chart {
    margin-top: 20px;
}

.row-bottom .target {
    margin-left: -4px;
}
```
